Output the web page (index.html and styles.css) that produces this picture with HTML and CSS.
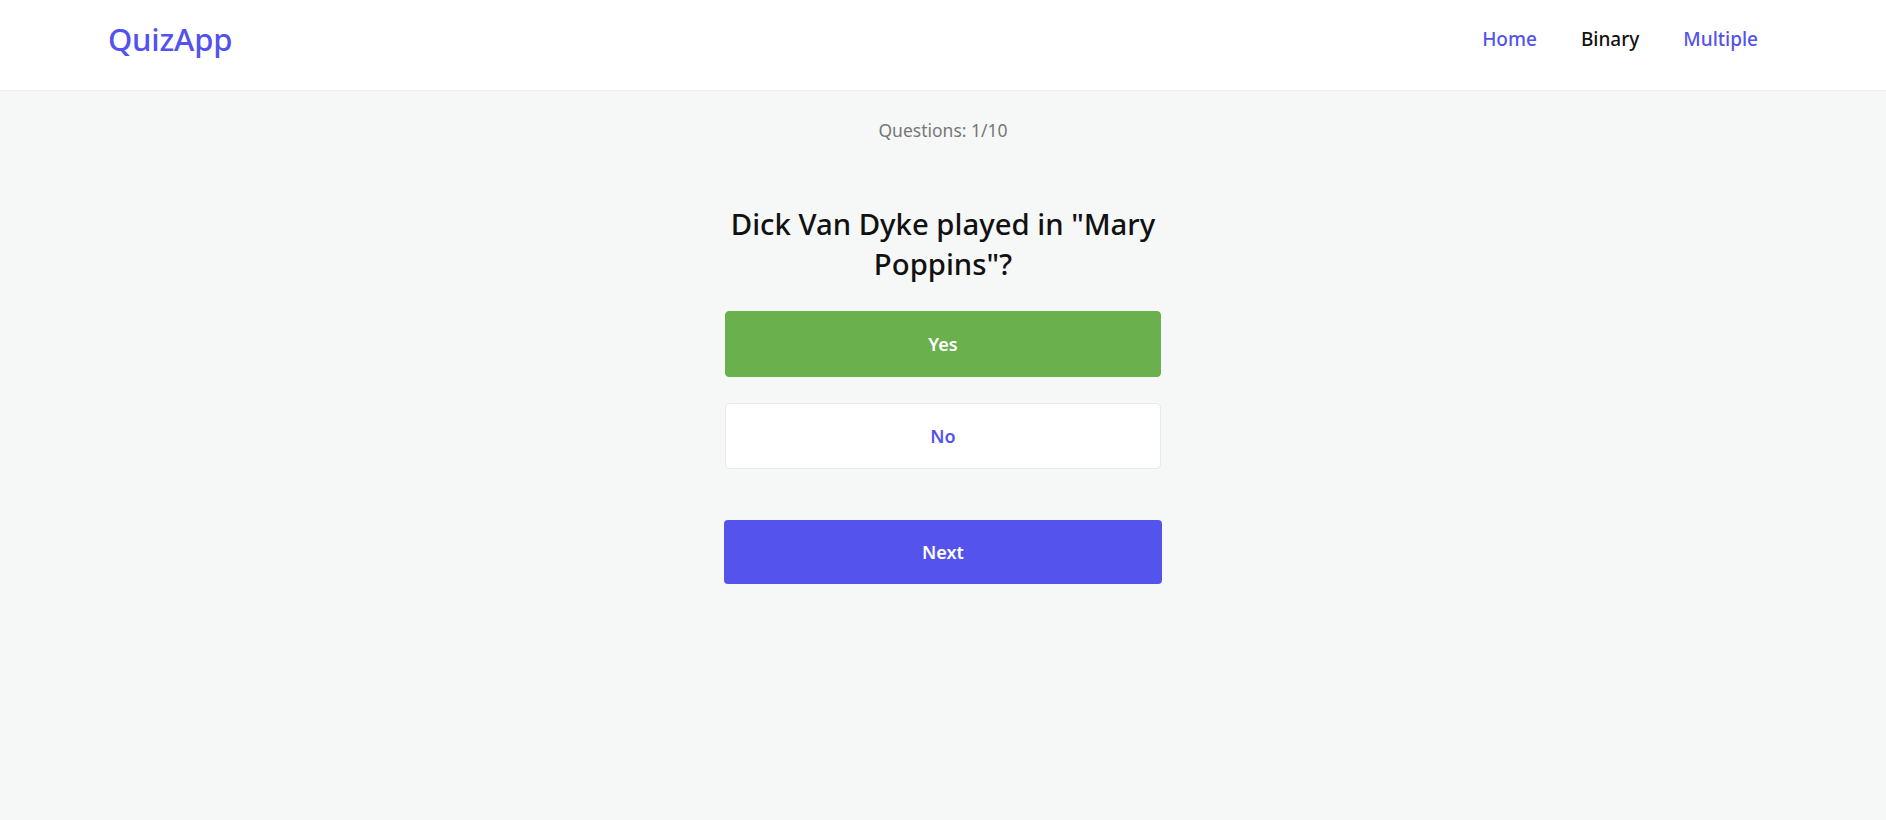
FILE: index.html
```html
<!DOCTYPE html>
<html lang="en">
<head>
<meta charset="utf-8">
<title>QuizApp</title>
<link rel="stylesheet" href="styles.css">
</head>
<body>
<header class="topbar">
  <a class="logo" href="#">QuizApp</a>
  <nav class="nav">
    <a class="nav-link" href="#">Home</a>
    <a class="nav-link active" href="#">Binary</a>
    <a class="nav-link" href="#">Multiple</a>
  </nav>
</header>
<main class="quiz">
  <p class="counter">Questions: 1/10</p>
  <h1 class="question">Dick Van Dyke played in "Mary Poppins"?</h1>
  <div class="answers">
    <button class="answer correct">Yes</button>
    <button class="answer">No</button>
  </div>
  <button class="next">Next</button>
</main>
</body>
</html>
```

FILE: styles.css
```css
* { box-sizing: border-box; }
html, body { margin: 0; padding: 0; }
body {
  background: #f6f7f7;
  font-family: "Noto Sans", "Open Sans", "Liberation Sans", sans-serif;
  color: #111;
  min-height: 100vh;
}
.topbar {
  height: 91px;
  background: #fff;
  border-bottom: 1px solid #eceeee;
  display: flex;
  align-items: center;
  justify-content: space-between;
  padding: 0 106px 0 108px;
}
.logo {
  font-size: 31px;
  color: #5352ed;
  text-decoration: none;
  font-weight: 500;
  letter-spacing: -0.2px;
  margin-top: -12px;
}
.nav { display: flex; margin-top: -12px; }
.nav-link {
  font-size: 19px;
  font-weight: 500;
  color: #5352ed;
  text-decoration: none;
  padding: 0 22px;
}
.nav-link.active { color: #111; }
.quiz {
  width: 436px;
  margin: 0 auto;
  display: flex;
  flex-direction: column;
  align-items: stretch;
}
.counter {
  margin: 27px 0 0;
  text-align: center;
  font-size: 17.5px;
  line-height: 24px;
  color: #777;
}
.question {
  margin: 62px 0 0;
  text-align: center;
  font-size: 29.3px;
  line-height: 40px;
  font-weight: 500;
  color: #111;
}
.answers {
  margin-top: 27px;
  display: flex;
  flex-direction: column;
  gap: 26px;
}
.answer, .next {
  font-family: inherit;
  height: 66px;
  border-radius: 4px;
  font-size: 18px;
  font-weight: 600;
  cursor: pointer;
}
.answer {
  background: #fff;
  border: 1px solid #e8eaea;
  color: #5352ed;
}
.answer.correct {
  background: #6ab04c;
  border-color: #6ab04c;
  color: #fff;
}
.next {
  margin-top: 51px;
  height: 64px;
  width: 438px;
  margin-left: -1px;
  background: #5454ec;
  border: none;
  color: #fff;
}
```
